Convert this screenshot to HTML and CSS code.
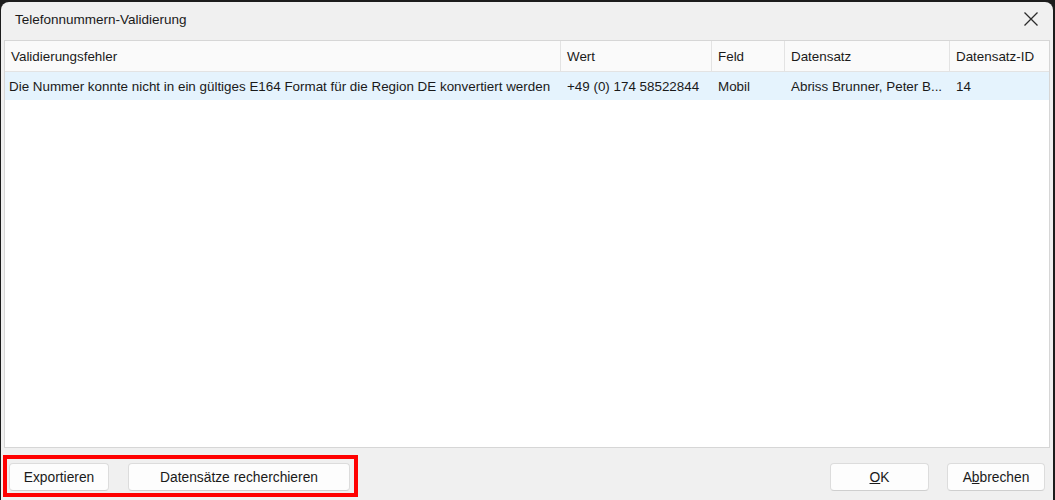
FILE: index.html
```
<!DOCTYPE html>
<html lang="de">
<head>
  <meta charset="UTF-8">
  <title>Telefonnummern-Validierung</title>
  <link rel="stylesheet" href="styles.css">
</head>
<body>

  <div class="window">
    <div class="titlebar">
      <span class="title">Telefonnummern-Validierung</span>
      <span class="close">
        <svg width="16" height="16" viewBox="0 0 16 16">
          <path d="M1.5 1.5 L14.5 14.5 M14.5 1.5 L1.5 14.5" stroke="#2b2b2b" stroke-width="1.3" fill="none"/>
        </svg>
      </span>
    </div>

    <div class="grid">
      <div class="row head">
        <div class="cell">Validierungsfehler</div>
        <div class="cell">Wert</div>
        <div class="cell">Feld</div>
        <div class="cell">Datensatz</div>
        <div class="cell">Datensatz-ID</div>
      </div>
      <div class="row selected">
        <div class="cell">Die Nummer konnte nicht in ein gültiges E164 Format für die Region DE konvertiert werden</div>
        <div class="cell">+49 (0) 174 58522844</div>
        <div class="cell">Mobil</div>
        <div class="cell">Abriss Brunner, Peter B...</div>
        <div class="cell">14</div>
      </div>
    </div>

    <div class="footer">
      <div class="marked">
        <button class="btn btn-export">Exportieren</button>
        <button class="btn btn-search">Datensätze recherchieren</button>
      </div>
      <div class="actions">
        <button class="btn btn-ok"><u>O</u>K</button>
        <button class="btn btn-cancel">A<u>b</u>brechen</button>
      </div>
    </div>
  </div>

</body>
</html>
```
FILE: styles.css
```
body {
  margin: 0;
  padding: 0;
  background-color: #1c1c1c;
  font-family: "Liberation Sans", Arial, sans-serif;
  font-size: 13.4px;
  color: #1a1a1a;
  overflow: hidden;
}
.window {
  margin: 2px 0 0 1px;
  width: 1052px;
  height: 498px;
  background-color: #f0f0f0;
  border-radius: 8px 8px 0 0;
  display: flex;
  flex-direction: column;
}
.titlebar {
  height: 38px;
  display: flex;
  align-items: center;
  justify-content: space-between;
  padding: 0 14px;
}
.title {
  font-size: 13.5px;
  margin-top: -4px;
}
.close {
  display: flex;
  margin-top: -4px;
}
.grid {
  margin: 0 3px;
  height: 406px;
  background-color: #fff;
  border: 1px solid #d6d6d6;
}
.row {
  display: grid;
  grid-template-columns: 556px 151px 73px 165px 1fr;
}
.head {
  height: 30px;
  background-color: #fafafa;
  border-bottom: 1px solid #e3e3e3;
}
.head .cell {
  border-right: 1px solid #e3e3e3;
}
.head .cell:last-child {
  border-right: none;
}
.cell {
  display: flex;
  align-items: center;
  padding: 0 6px;
  white-space: nowrap;
  overflow: hidden;
}
.selected {
  height: 28px;
  background-color: #e5f3fd;
}
.selected .cell:first-child {
  padding-left: 4px;
}
.footer {
  display: flex;
  justify-content: space-between;
  align-items: flex-start;
  padding: 7px 8px 0 2px;
}
.marked {
  display: flex;
  gap: 19px;
  padding: 4px 4px 2px 2px;
  border: 4px solid #ff0000;
}
.actions {
  display: flex;
  gap: 18px;
  margin-top: 8px;
}
.btn {
  height: 28px;
  background-color: #fdfdfd;
  border: 1px solid #dcdcdc;
  border-bottom-color: #cfcfcf;
  border-radius: 4px;
  font-family: "Liberation Sans", Arial, sans-serif;
  font-size: 13.8px;
  color: #1a1a1a;
  padding: 0;
}
.btn-export {
  width: 100px;
}
.btn-search {
  width: 222px;
}
.btn-ok {
  width: 99px;
}
.btn-cancel {
  width: 98px;
}
```
